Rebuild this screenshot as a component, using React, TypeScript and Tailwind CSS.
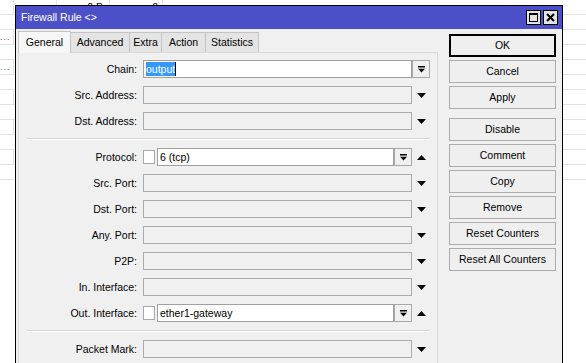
import React from 'react'

const BG_ROWS = Array.from({ length: 12 }, (_, i) => i)

const TABS = [
  { name: 'General', w: 'w-[53px]', active: true },
  { name: 'Advanced', w: 'w-[60px]' },
  { name: 'Extra', w: 'w-[33px]' },
  { name: 'Action', w: 'w-[45px]' },
  { name: 'Statistics', w: 'w-[54px]' },
]

const BUTTONS: { label: string; def?: boolean; gap?: boolean }[] = [
  { label: 'OK', def: true },
  { label: 'Cancel' },
  { label: 'Apply' },
  { label: 'Disable', gap: true },
  { label: 'Comment' },
  { label: 'Copy' },
  { label: 'Remove' },
  { label: 'Reset Counters' },
  { label: 'Reset All Counters' },
]

function Tri({ up }: { up?: boolean }) {
  return (
    <svg width="9" height="5" viewBox="0 0 9 5">
      <path d={up ? 'M0 5h9L4.5 0z' : 'M0 0h9L4.5 5z'} fill="#000" />
    </svg>
  )
}

function DropBtn() {
  return (
    <div className="w-[18px] h-[18px] shrink-0 border border-[#a8a8a8] bg-[#f0f0f0] flex items-center justify-center">
      <svg width="7" height="7" viewBox="0 0 7 7">
        <rect x="0" y="0" width="7" height="1.5" fill="#000" />
        <path d="M0 2.8h7L3.5 6.6z" fill="#000" />
      </svg>
    </div>
  )
}

function Row({ label, children, side }: { label: string; children?: React.ReactNode; side?: React.ReactNode }) {
  return (
    <div className="flex items-center h-[18px]">
      <div className="w-[118px] text-right">{label}</div>
      <div className="ml-[6px] w-[269px] h-full flex items-center">
        {children ?? <div className="w-full h-full border border-[#ababab] bg-[#f0f0f0]" />}
      </div>
      <div className="w-[19px] h-full flex items-center justify-center">{side ?? <Tri />}</div>
    </div>
  )
}

function CheckedField({ value }: { value: string }) {
  return (
    <>
      <div className="w-[12px] h-[14px] border border-[#a8a8a8] bg-white shrink-0" />
      <div className="ml-[2px] flex-1 h-full border border-[#a0a0a0] bg-white flex items-center pl-[2px]">{value}</div>
      <DropBtn />
    </>
  )
}

function Sep() {
  return (
    <div className="ml-[8px] w-[403px] border-t border-[#d4d4d4] border-b border-b-white" />
  )
}

export default function App() {
  return (
    <div className="relative w-[586px] h-[363px] overflow-hidden bg-white font-['Liberation_Sans',Arial,sans-serif] text-[10.5px] leading-none text-black">
      {/* list behind the window */}
      <div className="flex flex-col">
        {BG_ROWS.map(i => (
          <div key={i} className="h-[15px] flex border-b border-[#e3e3e3]">
            <div className={`w-[14px] h-full ${i % 2 === 0 ? 'border-r border-[#e3e3e3]' : ''} flex items-center text-[9px] tracking-[1px] ${i === 2 ? 'text-[#8a2a5a]' : 'text-[#2aa8a0]'}`}>
              {i === 2 || i === 4 ? '...' : ''}
            </div>
            {i === 0 && (
              <>
                <div className="w-[43px] border-r border-[#e3e3e3]" />
                <div className="w-[53px] border-r border-[#e3e3e3] text-right pr-[6px] pt-[2px]">0 B</div>
                <div className="w-[53px] border-r border-[#e3e3e3] text-right pr-[4px] pt-[2px]">0</div>
              </>
            )}
          </div>
        ))}
      </div>

      {/* window */}
      <div className="absolute left-[15px] top-[5px] w-[548px] h-[400px] border border-black bg-[#f0f0f0] flex flex-col">
        <div className="h-[23px] bg-[#4b4fc8] flex items-center pl-[5px] pr-[4px] shrink-0">
          <span className="text-white">Firewall Rule &lt;&gt;</span>
          <div className="ml-auto flex gap-[2px]">
            <div className="w-[15px] h-[15px] border border-black bg-[#e4e4e4] flex items-center justify-center">
              <div className="w-[9px] h-[9px] border border-black border-t-2" />
            </div>
            <div className="w-[15px] h-[15px] border border-black bg-[#e4e4e4] flex items-center justify-center">
              <svg width="9" height="9" viewBox="0 0 9 9">
                <path d="M1 1L8 8M8 1L1 8" stroke="#000" strokeWidth="2" />
              </svg>
            </div>
          </div>
        </div>

        <div className="flex pl-[2px] pt-[1px] flex-1">
          <div className="w-[420px] flex flex-col">
            <div className="flex h-[22px] items-end">
              {TABS.map(t => (
                <div
                  key={t.name}
                  className={`${t.w} flex items-center justify-center border border-b-0 ${
                    t.active
                      ? 'h-[22px] bg-[#f7f7f7] border-[#c4c4c4] relative z-10 -mb-px pb-px'
                      : 'h-[20px] bg-[#e4e4e4] border-[#c4c4c4] -ml-px first:ml-0'
                  }`}
                >
                  {t.name}
                </div>
              ))}
            </div>
            <div className="flex-1 border border-[#d9d9d9] pt-[7px] flex flex-col gap-[8px]">
              <Row label="Chain:" side={<div className="w-full h-full"><DropBtn /></div>}>
                <div className="w-full h-full border border-[#a0a0a0] bg-white flex items-center pl-[2px]">
                  <span className="bg-[#3399ff] text-white h-[14px] flex items-center">output</span>
                  <span className="w-px h-[14px] bg-black" />
                </div>
              </Row>
              <Row label="Src. Address:" />
              <Row label="Dst. Address:" />
              <Sep />
              <Row label="Protocol:" side={<Tri up />}>
                <CheckedField value="6 (tcp)" />
              </Row>
              <Row label="Src. Port:" />
              <Row label="Dst. Port:" />
              <Row label="Any. Port:" />
              <Row label="P2P:" />
              <Row label="In. Interface:" />
              <Row label="Out. Interface:" side={<Tri up />}>
                <CheckedField value="ether1-gateway" />
              </Row>
              <Sep />
              <Row label="Packet Mark:" />
            </div>
          </div>

          <div className="ml-[11px] w-[107px] pt-[4px] flex flex-col gap-[3px]">
            {BUTTONS.map(b => (
              <div
                key={b.label}
                className={`h-[23px] flex items-center justify-center bg-[#efefef] ${
                  b.def ? 'border-2 border-black' : 'border border-[#acacac]'
                } ${b.gap ? 'mt-[6px]' : ''}`}
              >
                {b.label}
              </div>
            ))}
          </div>
        </div>
      </div>
    </div>
  )
}
